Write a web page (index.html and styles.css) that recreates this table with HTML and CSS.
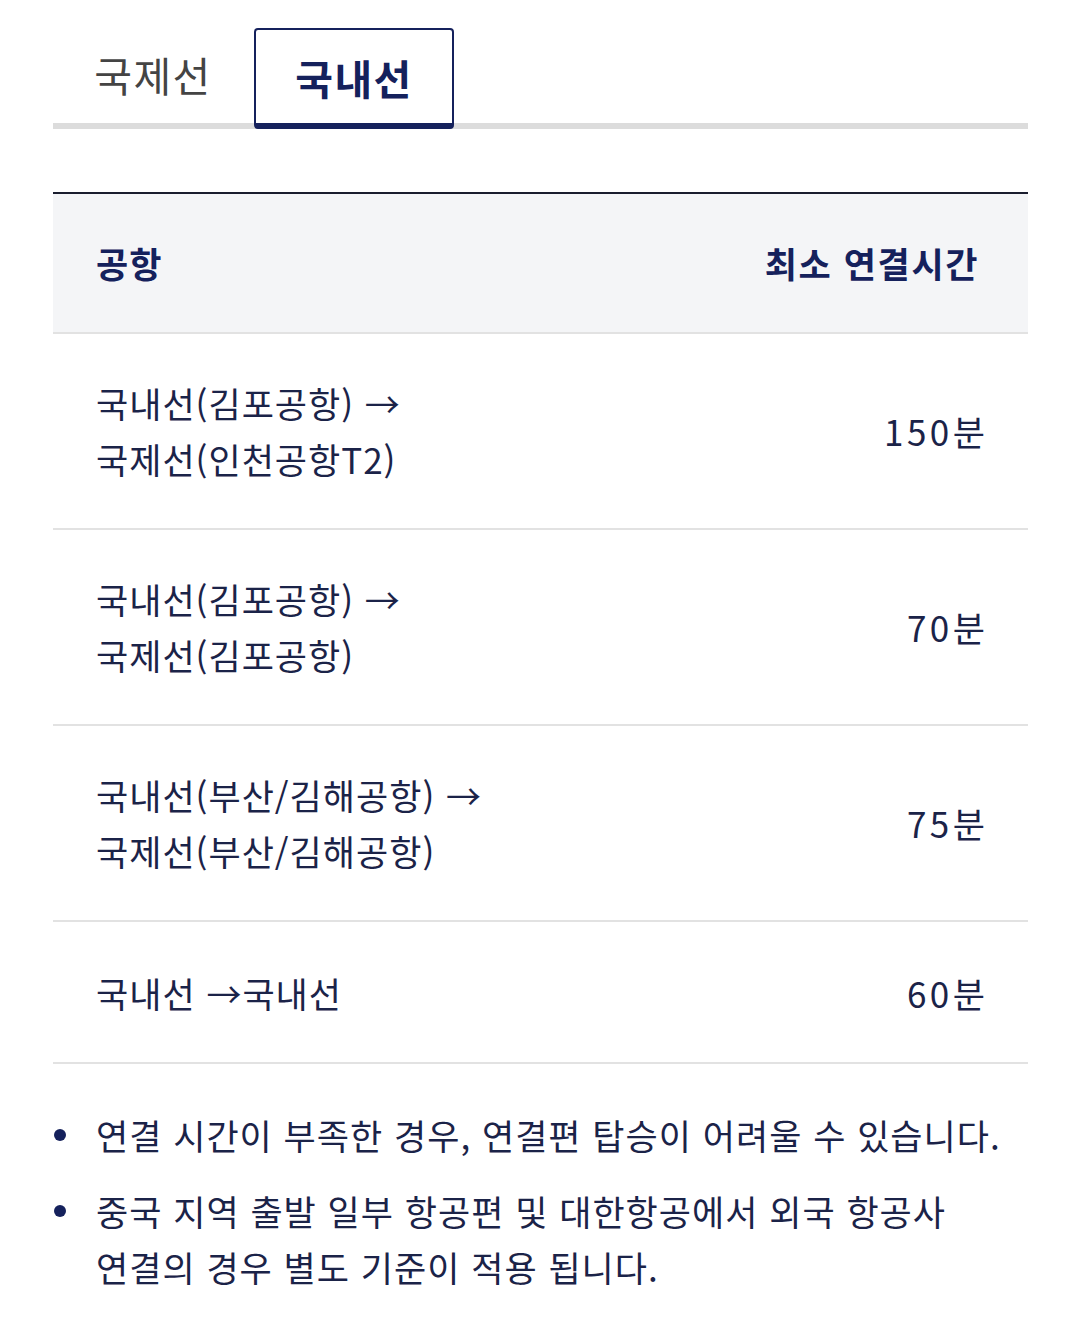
FILE: index.html
```html
<!DOCTYPE html>
<html lang="ko">
<head>
<meta charset="utf-8">
<link rel="stylesheet" href="styles.css">
</head>
<body>
<div class="page">
  <div class="tabs">
    <div class="tab">국제선</div>
    <div class="tab active">국내선</div>
  </div>
  <div class="table">
    <div class="row head">
      <div class="cell-left">공항</div>
      <div class="cell-right">최소 연결시간</div>
    </div>
    <div class="row">
      <div class="cell-left">국내선(김포공항) →<br>국제선(인천공항T2)</div>
      <div class="cell-right">150분</div>
    </div>
    <div class="row">
      <div class="cell-left">국내선(김포공항) →<br>국제선(김포공항)</div>
      <div class="cell-right">70분</div>
    </div>
    <div class="row">
      <div class="cell-left">국내선(부산/김해공항) →<br>국제선(부산/김해공항)</div>
      <div class="cell-right">75분</div>
    </div>
    <div class="row last">
      <div class="cell-left">국내선 →국내선</div>
      <div class="cell-right">60분</div>
    </div>
  </div>
  <ul class="notes">
    <li>연결 시간이 부족한 경우, 연결편 탑승이 어려울 수 있습니다.</li>
    <li>중국 지역 출발 일부 항공편 및 대한항공에서 외국 항공사<br>연결의 경우 별도 기준이 적용 됩니다.</li>
  </ul>
</div>
</body>
</html>
```

FILE: styles.css
```css
html, body {
  margin: 0;
  padding: 0;
  background: #ffffff;
}
body {
  font-family: "Noto Sans CJK KR", "Noto Sans", sans-serif;
  color: #1b2348;
}
.page {
  width: 975px;
  margin: 0 0 0 53px;
  padding-top: 28px;
}
.tabs {
  display: flex;
  gap: 1px;
  border-bottom: 6px solid #dcdcdc;
}
.tab {
  width: 200px;
  height: 95px;
  box-sizing: border-box;
  display: flex;
  align-items: center;
  justify-content: center;
  font-size: 41px;
  letter-spacing: 1.5px;
  color: #444444;
  padding-bottom: 4px;
}
.tab.active {
  height: 101px;
  margin-bottom: -6px;
  border: 2px solid #15215c;
  border-bottom: 6px solid #15215c;
  border-radius: 4px;
  color: #15215c;
  font-weight: 700;
  padding-bottom: 0;
}
.table {
  margin-top: 63px;
  border-top: 2px solid #1a1d2e;
}
.row {
  display: flex;
  justify-content: space-between;
  align-items: center;
  padding: 41px 43px;
  font-size: 35px;
  line-height: 56px;
  letter-spacing: 1px;
  border-bottom: 2px solid #e2e2e2;
}
.row.last {
  padding: 42px 43px 41px 43px;
  margin-top: 1px;
}
.row.head {
  background: #f4f5f7;
  font-size: 35px;
  font-weight: 700;
  padding: 41px 51px 41px 43px;
  color: #15215c;
}
.cell-right {
  text-align: right;
  letter-spacing: 3.5px;
  margin-right: -3.5px;
}
.head .cell-right {
  letter-spacing: 1.6px;
  margin-right: -2px;
}
.notes {
  list-style: none;
  margin: 0;
  padding: 43px 0 0 0;
  font-size: 35px;
  line-height: 56px;
  letter-spacing: 1px;
}
.notes li {
  position: relative;
  padding-left: 43px;
  margin-bottom: 20px;
}
.notes li::before {
  content: "";
  position: absolute;
  left: 1px;
  top: 22px;
  width: 12px;
  height: 12px;
  border-radius: 50%;
  background: #15215c;
}
```
